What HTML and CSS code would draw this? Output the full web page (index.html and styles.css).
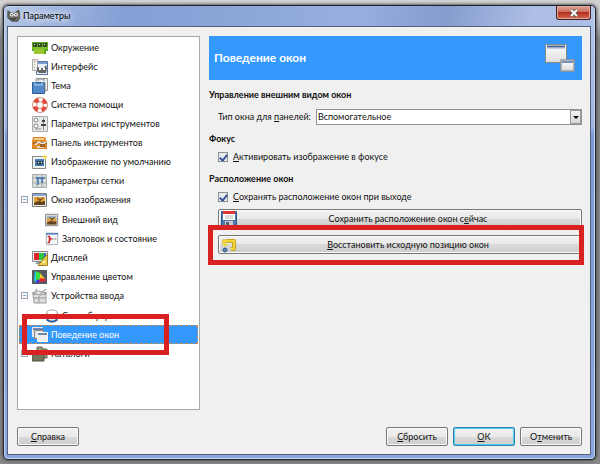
FILE: index.html
```html
<!DOCTYPE html>
<html lang="ru">
<head>
  <meta charset="utf-8">
  <title>Параметры</title>
  <link rel="stylesheet" href="styles.css">
</head>
<body>
  <div class="window">
    <header class="titlebar">
      <svg class="icon app-icon" viewBox="0 0 16 16"><path d="M1 2l4 3h5l4-4 2 4v6l-3 4H6L1 11z" fill="#66655f" stroke="#45443f"/><circle cx="6" cy="7" r="2.300" fill="#fff"/><circle cx="11" cy="7" r="2.300" fill="#fff"/><circle cx="6" cy="7" r="1" fill="#222"/><circle cx="11" cy="7" r="1" fill="#222"/><path d="M4 12q5 2 8-1" stroke="#222" fill="none"/></svg>
      <h1 class="title">Параметры</h1>
      <button class="close" aria-label="Закрыть"><svg viewBox="0 0 10 8"><path d="M2 1l6 6M8 1L2 7" stroke="#555" stroke-width="3.4"/><path d="M2 1l6 6M8 1L2 7" stroke="#fff" stroke-width="2"/></svg></button>
    </header>

    <div class="client">
      <main class="main">
        <nav class="sidebar">
          <ul class="tree">
            <li><a class="item" href="#"><svg class="icon" viewBox="0 0 16 16"><path d="M0 2h16v9h-2v3H2v-3H0z" fill="#5ca51c"/><path d="M1 3h4v4H1zM6 3h4v4H6zM11 3h4v4h-4z" fill="#344d25"/><path d="M2 4h1v1H2zM7 4h1v1H7zM12 4h1v1h-1z" fill="#ddd"/><path d="M3 9v5M5 9v5M7 9v5M9 9v5M11 9v5" stroke="#dce845"/><path d="M0 8h16" stroke="#9bd93c"/></svg>Окружение</a></li>
            <li><a class="item" href="#"><svg class="icon" viewBox="0 0 16 16"><path d="M4.500 2.500h11v13h-11z" fill="#e7edf4" stroke="#56749f"/><path d="M5 3h10v2H5z" fill="#799fd0"/><path d="M.5.500h5v11h-5z" fill="#eee" stroke="#aaa"/><path d="M2 2h1v1H2z" fill="#d55"/><path d="M2 5h1v1H2z" fill="#e3b646"/><path d="M2 8h1v1H2z" fill="#68b462"/><path d="M5 8l3 1h4l2-3 1 3-1 5H7l-2-2z" fill="#66665f"/><path d="M7 9h2v2H7zM11 9h2v2h-2z" fill="#fff"/></svg>Интерфейс</a></li>
            <li><a class="item" href="#"><svg class="icon" viewBox="0 0 16 16"><path d="M4 .5h11.500v12H4z" fill="#eee" stroke="#999"/><path d="M6 3V1h6v2" fill="none" stroke="#888"/><path d="M.5 4.500h12v11H.5z" fill="#5189c9" stroke="#2d5c98"/><path d="M3 4v3h7V4" fill="none" stroke="#b7d2ef"/><path d="M13 5v9" stroke="#888"/></svg>Тема</a></li>
            <li><a class="item" href="#"><svg class="icon" viewBox="0 0 16 16"><circle cx="8" cy="8" r="5.500" fill="none" stroke="#fff" stroke-width="4"/><circle cx="8" cy="8" r="5.500" fill="none" stroke="#e8463a" stroke-width="4" stroke-dasharray="4.640 4" stroke-dashoffset="-2"/><circle cx="8" cy="8" r="7.500" fill="none" stroke="#b8693f" stroke-width=".7"/><circle cx="8" cy="8" r="3.300" fill="#fff" stroke="#b8693f" stroke-width=".7"/></svg>Система помощи</a></li>
            <li><a class="item" href="#"><svg class="icon" viewBox="0 0 16 16"><path d="M.5.500h15v15H.5z" fill="#e8e8e6" stroke="#aaa"/><circle cx="4" cy="4" r="2" fill="#fff" stroke="#888"/><circle cx="4" cy="10" r="2" fill="#fff" stroke="#888"/><path d="M3 13h6M11.500 2v12" stroke="#888"/><path d="M9 8h5v2H9zM10 4h3v2h-3z" fill="#444"/></svg>Параметры инструментов</a></li>
            <li><a class="item" href="#"><svg class="icon" viewBox="0 0 16 16"><path d="M1 2h12l2 5v7H0V7z" fill="#dc8a25"/><path d="M2 3h10v2H2z" fill="#edca8b"/><path d="M1 8h14" stroke="#8b5c20"/><path d="M3 10l4-3 3 2 4-2M5 12h7" stroke="#e5eefa" stroke-width="1.500" fill="none"/><path d="M8 9h5v3H8z" fill="#a36321"/></svg>Панель инструментов</a></li>
            <li><a class="item" href="#"><svg class="icon" viewBox="0 0 16 16"><path d="M.5 2.500h13v12H.5z" fill="#eef0f1" stroke="#888"/><path d="M3 5h9v7H3z" fill="#4c80bb"/><path d="M4 6l2 1h3l2-1v4l-2 1H5z" fill="#374a5a"/><path d="M6 8h1v1H6zM9 8h1v1H9z" fill="#fff"/><path d="M13 0l1 2 2 1-2 1-1 2-1-2-2-1 2-1z" fill="#f4df54"/></svg>Изображение по умолчанию</a></li>
            <li><a class="item" href="#"><svg class="icon" viewBox="0 0 16 16"><path d="M.5 1.500h14v13H.5z" fill="#d9dedb" stroke="#a9afac"/><path d="M5 2v12M10 2v12M1 5h13M1 10h13" stroke="#9eaaa8"/><path d="M4 5h9M6 5v7M10 5v5" stroke="#3c72b4" stroke-width="1.500"/></svg>Параметры сетки</a></li>
            <li>
              <div class="branch">
                <button class="toggle" aria-label="Свернуть">−</button>
                <a class="item" href="#"><svg class="icon" viewBox="0 0 16 16"><path d="M.5 1.500h14v13H.5z" fill="#eee" stroke="#777"/><path d="M1 2h13v2H1z" fill="#88a7d3"/><path d="M2 5h11v8H2z" fill="#e49c37"/><path d="M2 11l4-2 3 1 4-1v4H2z" fill="#63451f"/><path d="M8 12V7M5 6l3 2 3-2" stroke="#4b3218" fill="none"/></svg>Окно изображения</a>
              </div>
              <ul class="subtree">
                <li><a class="item" href="#"><svg class="icon" viewBox="0 0 16 16"><path d="M.5 1.500h14v13H.5z" fill="#eee" stroke="#777"/><path d="M2 3h11v10H2z" fill="#a3b5c2"/><path d="M2 6h11v7H2z" fill="#dda145"/><path d="M2 11l4-2 3 1 4-1v4H2z" fill="#63451f"/><path d="M8 12V6M5 5l3 2 3-2" stroke="#4b3218" fill="none"/></svg>Внешний вид</a></li>
                <li><a class="item" href="#"><svg class="icon" viewBox="0 0 16 16"><path d="M1.500 1.500h13v13h-13z" fill="#f7f8fa" stroke="#9ba4b4"/><path d="M1 1h14v2H1z" fill="#5a84bd"/><path d="M3 5h2v7H3M5 6l2 2-2 2" stroke="#d32626" stroke-width="1.500" fill="none"/><path d="M8 8h2M11 8h2" stroke="#805555"/></svg>Заголовок и состояние</a></li>
              </ul>
            </li>
            <li><a class="item" href="#"><svg class="icon" viewBox="0 0 16 16"><path d="M.5 1.500h15v10H.5z" fill="#eee" stroke="#888"/><path d="M2 3h5v7H2z" fill="#e3262e"/><path d="M7 3h5v7H7z" fill="#31c540"/><path d="M12 3h2v7h-2z" fill="#3a62cc"/><path d="M5 12h5v2H3z" fill="#999"/><path d="M15.500 4v11.500H6z" fill="#e9cd50" stroke="#a18021"/><path d="M13 10v3h-3z" fill="#fff8cf"/></svg>Дисплей</a></li>
            <li><a class="item" href="#"><svg class="icon" viewBox="0 0 16 16"><path d="M0 1h15v14H0z" fill="#555b60"/><path d="M3 2l5 2-1 5-4 4z" fill="#22db3e"/><path d="M3 2l-1 8 1 4 5-5z" fill="#1fcfdd"/><path d="M8 4l5 6-6 1z" fill="#e9d126"/><path d="M13 10l1 2-8 1 2-4z" fill="#e92432"/><path d="M3 14l3-5 2 4z" fill="#5134e2"/><path d="M4 3l4 1v6l-4 1z" fill="#3ee139"/></svg>Управление цветом</a></li>
            <li>
              <div class="branch">
                <button class="toggle" aria-label="Свернуть">−</button>
                <a class="item" href="#"><svg class="icon" viewBox="0 0 16 16"><path d="M1 6h13v9H2z" fill="#dedede" stroke="#999"/><path d="M0 5l7-2 8 2-6 2z" fill="#eee" stroke="#999"/><path d="M3 4l2-3M7 7l7-6M7 8v7M2 10h11" stroke="#aaa" stroke-width="1.500"/></svg>Устройства ввода</a>
              </div>
              <ul class="subtree">
                <li><a class="item" href="#"><svg class="icon" viewBox="0 0 16 16"><path d="M2 4v9q6 4 12 0V4" fill="#e5e7e9" stroke="#929292"/><ellipse cx="8" cy="4" rx="6" ry="3" fill="#fff" stroke="#999"/><path d="M2 12q6 5 12 0" stroke="#315f9d" stroke-width="2" fill="none"/></svg>Способ управления</a></li>
              </ul>
            </li>
            <li><a class="item selected" href="#"><svg class="icon" viewBox="0 0 16 16"><path d="M.5.500h10v9H.5z" fill="#ddd" stroke="#eee"/><path d="M2.500 3.500h9v8h-9z" fill="#e5e5e5" stroke="#888"/><path d="M5.500 5.500h10v9h-10z" fill="#eee" stroke="#f7f7f7"/><path d="M1 1h10v2H1zM6 6h9v2H6z" fill="#6e87b2"/></svg>Поведение окон</a></li>
            <li>
              <div class="branch">
                <button class="toggle" aria-label="Развернуть">+</button>
                <a class="item" href="#"><svg class="icon" viewBox="0 0 16 16"><path d="M5 1h5l1 2h4v9H5z" fill="#9b987f" stroke="#66644f"/><path d="M0 5h5l1 2h6v8H0z" fill="#77745e" stroke="#535140"/><path d="M8 4h5v2H8z" fill="#4b8a6c"/></svg>Каталоги</a>
              </div>
            </li>
          </ul>
          <span class="marker"></span>
        </nav>

        <form class="page">
          <div class="banner">
            <h2>Поведение окон</h2>
            <svg class="banner-icon" viewBox="0 0 30 28"><defs><linearGradient id="pane" x2="0" y2="1"><stop stop-color="#fff"/><stop offset="1" stop-color="#dcdcdc"/></linearGradient></defs><path d="M.5.500h21v18H.5z" fill="url(#pane)" stroke="#888"/><path d="M2 1.500h18v2H2z" fill="#44608f"/><path d="M2 3.500h18v1H2z" fill="#91a6ca"/><path d="M16 16h13v11H16z" fill="url(#pane)" stroke="#999" stroke-width="1.500"/><path d="M17 17h11v2H17z" fill="#7690ba"/></svg>
          </div>

          <h3>Управление внешним видом окон</h3>
          <div class="field select-field">
            <label for="panelType">Тип окна для <u>п</u>анелей:</label>
            <div class="combo">
              <select id="panelType">
                <option>Вспомогательное</option>
              </select>
              <span class="arrow"></span>
            </div>
          </div>

          <h3>Фокус</h3>
          <div class="field">
            <input type="checkbox" id="activate" checked>
            <label for="activate"><u>А</u>ктивировать изображение в фокусе</label>
          </div>

          <h3>Расположение окон</h3>
          <div class="field last">
            <input type="checkbox" id="savePos" checked>
            <label for="savePos"><u>С</u>охранять расположение окон при выходе</label>
          </div>

          <div class="actions">
            <button type="button" class="wide"><svg class="icon" viewBox="0 0 16 16"><path d="M.5.500h15v15H.5z" fill="#4b78b2" stroke="#315988"/><path d="M2 1h12v8H2z" fill="#fff"/><path d="M2 0h12v3H2z" fill="#df3431"/><path d="M4 5h8M4 7h8" stroke="#bbb"/><path d="M4 10h8v6H4z" fill="#ccc"/><path d="M5 11h3v4H5z" fill="#55606c"/></svg><span>Сохранить расположение окон с<u>е</u>йчас</span></button>
            <button type="button" class="wide"><svg class="icon" viewBox="0 0 16 16"><path d="M6 4h7v8h-3" fill="none" stroke="#b39419" stroke-width="4" stroke-linejoin="round"/><path d="M3 8V4h4" fill="none" stroke="#b39419" stroke-width="3"/><path d="M3 8V4h10v8h-3" fill="none" stroke="#f3d638" stroke-width="2.400" stroke-linejoin="round"/><path d="M1 7h6l-3 3z" fill="#f3d638"/><circle cx="4" cy="13" r="2" fill="#5783bd" stroke="#2d568e"/></svg><span><u>В</u>осстановить исходную позицию окон</span></button>
            <span class="marker"></span>
          </div>
        </form>
      </main>

      <footer class="footer">
        <button class="btn help"><u>С</u>правка</button>
        <button class="btn"><u>С</u>бросить</button>
        <button class="btn default"><u>О</u>К</button>
        <button class="btn">О<u>т</u>менить</button>
      </footer>
    </div>
  </div>
</body>
</html>
```

FILE: styles.css
```css
* {
  box-sizing: border-box;
}

body {
  margin: 0;
  padding: 5px 4px 4px 3px;
  height: 100vh;
  font-family: Lato, Roboto, sans-serif;
  font-size: 9px;
  line-height: 12px;
  color: #111;
  background: linear-gradient(#d2d2d2, #d2d2d2 14px, #858585 40px, #888);
}

h1, h2, h3, ul {
  margin: 0;
  padding: 0;
  font-size: inherit;
}

button, select, input {
  margin: 0;
  font: inherit;
  color: inherit;
}

.window {
  height: 100%;
  display: flex;
  flex-direction: column;
  padding: 0 4px 4px 3px;
  border: 1px solid #20242e;
  border-radius: 5px;
  background: linear-gradient(#b4c6e6, #9fb5df 120px, #7c9ad6 130px, #8ba6dc);
  box-shadow: 0 0 3px 1px #555, inset 0 0 0 1px #c5d5f2;
}

.titlebar {
  display: flex;
  height: 20px;
  align-items: center;
  gap: 3px;
  padding-bottom: 1px;
  background: linear-gradient(100deg, transparent 0, #859fd5 20%, #8aa4d8 35%, #97afe0 60%, #859dce 75%, #aebfe5 90%);
}

.title {
  flex: 1;
  font-weight: normal;
  color: #000;
  text-shadow: 0 0 6px #fff, 0 0 8px #fff;
}

.close {
  align-self: flex-start;
  width: 35px;
  height: 14px;
  padding: 0;
  display: flex;
  align-items: center;
  justify-content: center;
  border: 1px solid #461d20;
  border-top: 0;
  border-radius: 0 0 3px 3px;
  background: linear-gradient(#e0a499, #cc6c5c 45%, #b52f1f 50%, #d16a50);
  box-shadow: inset 0 0 0 1px #e3aaa0;
}

.close svg {
  width: 10px;
  height: 8px;
}

.client {
  flex: 1;
  min-height: 0;
  display: flex;
  flex-direction: column;
  gap: 17px;
  padding: 9px 8px 8px 9px;
  border: 1px solid #56627c;
  background: #f0f0f0;
}

.icon {
  width: 16px;
  height: 16px;
  flex: none;
}

.app-icon {
  width: 13px;
  height: 13px;
}

.main {
  flex: 1;
  min-height: 0;
  display: flex;
  gap: 9px;
}

.sidebar {
  position: relative;
  flex: 0 0 183px;
  border: 1px solid #a5a8ae;
  background: #fff;
}

.tree, .subtree {
  list-style: none;
}

.tree {
  padding-top: 1px;
}

.subtree {
  margin-top: 1px;
}

.item {
  display: flex;
  align-items: center;
  gap: 3px;
  height: 19px;
  padding-left: 14px;
  color: inherit;
  text-decoration: none;
  white-space: nowrap;
}

.subtree .item {
  padding-left: 27px;
}

.subtree .icon {
  width: 14px;
  height: 14px;
}

.branch {
  display: flex;
  align-items: center;
  padding-left: 3px;
}

.branch .item {
  padding-left: 4px;
}

.toggle {
  width: 7px;
  height: 7px;
  padding: 0;
  font-size: 7px;
  line-height: 5px;
  color: #3c5a96;
  border: 1px solid #9aa5b5;
  background: #f5f7fa;
}

.item.selected {
  margin: 0 1px;
  padding-left: 13px;
  color: #fff;
  background: #3399ff;
  outline: 1px dashed #c58a55;
  outline-offset: -1px;
}

.marker {
  position: absolute;
  border: 5px solid #d92121;
  pointer-events: none;
}

.sidebar .marker {
  left: 4px;
  top: 277px;
  width: 147px;
  height: 41px;
}

.page {
  flex: 1;
  min-width: 0;
}

.banner {
  display: flex;
  align-items: center;
  justify-content: space-between;
  height: 44px;
  margin-bottom: 9px;
  padding: 0 7px 0 5px;
  color: #fff;
  background: #3399ff;
}

.banner h2 {
  font-size: 12px;
}

.banner-icon {
  width: 30px;
  height: 28px;
}

.field {
  display: flex;
  align-items: center;
  gap: 5px;
  margin: 6px 0 10px;
  padding-left: 9px;
}

.select-field {
  margin: 8px 0;
}

.last {
  margin-bottom: 6px;
}

.combo {
  position: relative;
  flex: 1;
}

.combo select {
  display: block;
  width: 100%;
  height: 16px;
  padding: 0 1px;
  appearance: none;
  border: 1px solid #8f949c;
  border-radius: 0;
  background: #fff;
}

.arrow {
  position: absolute;
  top: 1px;
  right: 1px;
  bottom: 1px;
  width: 11px;
  border: 1px solid #999;
  background: linear-gradient(#f5f5f5, #d5d5d5);
  pointer-events: none;
}

.arrow::after {
  content: "";
  position: absolute;
  left: 2px;
  top: 5px;
  border: 3px solid transparent;
  border-top-color: #000;
  border-bottom: 0;
}

input[type="checkbox"] {
  width: 10px;
  height: 10px;
  appearance: none;
  border: 1px solid #8e8f8f;
  background: #e8ecf3;
  display: flex;
  align-items: center;
  justify-content: center;
}

input[type="checkbox"]:checked::before {
  content: "";
  width: 3px;
  height: 6px;
  border: solid #3c5496;
  border-width: 0 2px 2px 0;
  transform: rotate(40deg);
}

.actions {
  position: relative;
  display: flex;
  flex-direction: column;
  gap: 7px;
  padding-left: 9px;
}

.wide, .btn {
  height: 19px;
  border: 1px solid #777;
  border-radius: 2px;
  background: linear-gradient(#f2f2f2, #e9e9e9 50%, #dadada 50%, #cdcdcd);
  box-shadow: inset 0 0 0 1px #fafafa;
}

.wide {
  display: flex;
  align-items: center;
  padding: 0 2px;
}

.wide span {
  flex: 1;
}

.actions .marker {
  left: -1px;
  right: -2px;
  top: 16px;
  height: 40px;
}

.footer {
  display: flex;
  gap: 5px;
}

.btn {
  width: 62px;
  padding: 0;
}

.help {
  margin-right: auto;
}

.btn.default {
  border-color: #3c7fb1;
  box-shadow: inset 0 0 0 1px #46cdf5;
}
```
